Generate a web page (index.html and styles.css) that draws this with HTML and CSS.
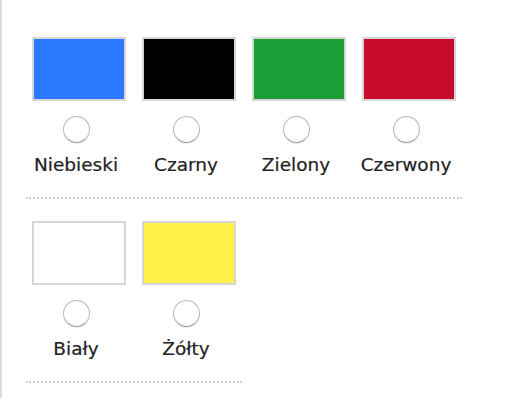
FILE: index.html
```html
<!DOCTYPE html>
<html lang="pl">
<head>
<meta charset="utf-8">
<link rel="stylesheet" href="styles.css">
</head>
<body>
<div class="panel">
  <div class="row">
    <label class="item"><span class="swatch blue"></span><input type="radio" name="c" class="radio"><span class="name">Niebieski</span></label>
    <label class="item"><span class="swatch black"></span><input type="radio" name="c" class="radio"><span class="name">Czarny</span></label>
    <label class="item"><span class="swatch green"></span><input type="radio" name="c" class="radio"><span class="name">Zielony</span></label>
    <label class="item"><span class="swatch red"></span><input type="radio" name="c" class="radio"><span class="name">Czerwony</span></label>
  </div>
  <div class="row">
    <label class="item"><span class="swatch white"></span><input type="radio" name="c" class="radio"><span class="name">Biały</span></label>
    <label class="item"><span class="swatch yellow"></span><input type="radio" name="c" class="radio"><span class="name">Żółty</span></label>
  </div>
</div>
</body>
</html>
```

FILE: styles.css
```css
html, body {
  margin: 0;
  padding: 0;
  background: #fff;
}
.panel {
  box-sizing: border-box;
  height: 398px;
  border-left: 2px solid #dcdcdc;
  padding: 15px 0 0 24px;
  display: flex;
  flex-direction: column;
  align-items: flex-start;
  font-family: "DejaVu Sans", Verdana, sans-serif;
}
.row {
  display: flex;
  gap: 4px;
  padding: 22px 0 21px;
  border-bottom: 2px dotted #cfcfcf;
}
.item {
  width: 106px;
  display: flex;
  flex-direction: column;
  align-items: center;
  padding-right: 6px;
  box-sizing: border-box;
}
.swatch {
  display: block;
  box-sizing: border-box;
  width: 94px;
  height: 64px;
  border: 2px solid #d6d6d6;
  align-self: flex-start;
  margin-left: 6px;
}
.blue { background: #2b79ff; }
.black { background: #000; }
.green { background: #1a9e36; }
.red { background: #c7092c; }
.white { background: #fff; }
.yellow { background: #fff04a; }
.radio {
  appearance: none;
  -webkit-appearance: none;
  box-sizing: border-box;
  width: 27px;
  height: 27px;
  margin: 15px 0 0;
  border-radius: 50%;
  border: 1.5px solid #b8b8b8;
  border-bottom-color: #9e9e9e;
  background: radial-gradient(circle at 50% 40%, #ffffff 55%, #f2f2f2 100%);
  box-shadow: 0 1px 1px rgba(0,0,0,0.08);
}
.name {
  margin-top: 11px;
  font-size: 18.5px;
  line-height: 22px;
  color: #222;
  white-space: nowrap;
  -webkit-text-stroke: 0.2px #222;
}
```
